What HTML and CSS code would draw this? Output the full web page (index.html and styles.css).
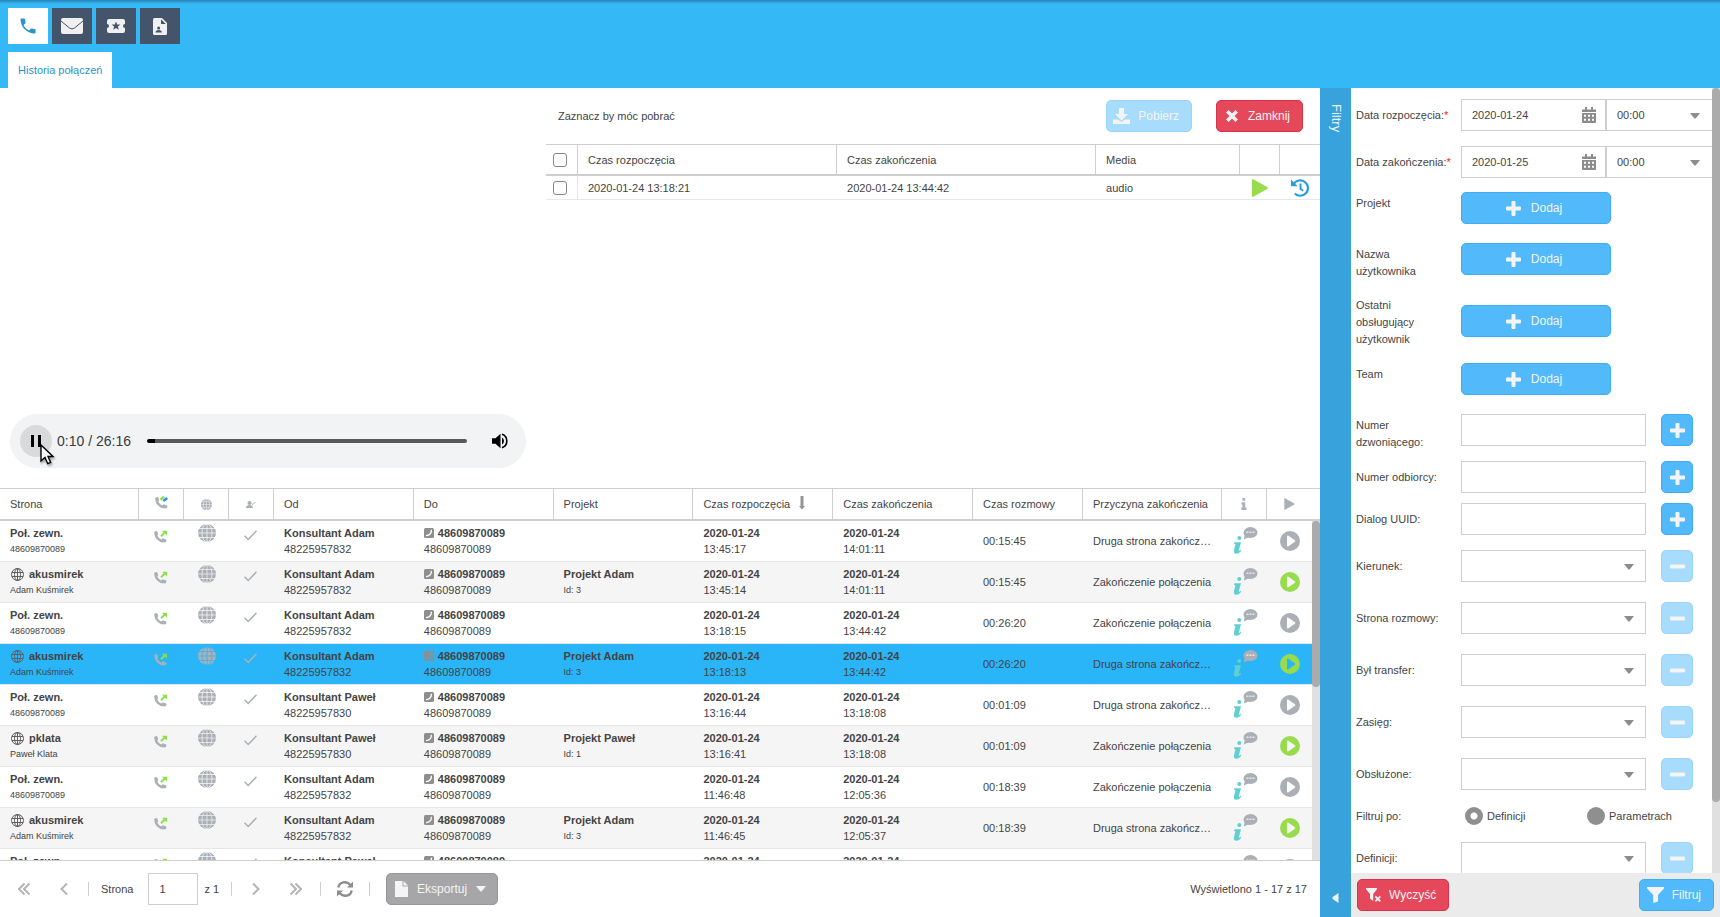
FILE: index.html
```html
<!DOCTYPE html>
<html lang="pl">
<head>
<meta charset="utf-8">
<title>Historia połączeń</title>
<link rel="stylesheet" href="styles.css">
</head>
<body>
<svg class="sprite" aria-hidden="true">
  <symbol id="phone" viewBox="0 0 24 24"><path d="M6.600 10.800c1.400 2.800 3.800 5.100 6.600 6.600l2.200-2.200c.3-.3.7-.4 1-.2 1.100.4 2.300.6 3.600.6.6 0 1 .4 1 1V20c0 .6-.4 1-1 1C10.600 21 3 13.400 3 4c0-.6.4-1 1-1h3.500c.6 0 1 .4 1 1 0 1.300.2 2.500.6 3.600.1.300 0 .7-.2 1z"/></symbol>
  <symbol id="call" viewBox="0 0 13 13"><path fill="none" stroke="currentColor" stroke-width="2.600" d="M1.600 3.500C2 7.500 5 10.800 9.500 11.300"/><path d="M0 2.600Q.5 1 2.300 1q.9 0 1.200 1l.6 1.800q.2.900-.6 1.300L2 6zM7 11l1-2q.5-.9 1.400-.6l2.200.8q1 .4.900 1.200-.2 1.800-2 2.200z"/></symbol>
  <symbol id="outgoing" viewBox="0 0 13 13"><use href="#call"/><path fill="none" stroke="#8ede4c" stroke-width="2" d="M7 6.200l3.500-3.500"/><path fill="#8ede4c" d="M8 .8h5v4.700z"/></symbol>
  <symbol id="globe" viewBox="0 0 18 18"><circle cx="9" cy="9" r="9" fill="currentColor"/><g fill="none" stroke="var(--cut, #fff)" stroke-width=".7"><path d="M9 0v18M0 9h18M1 4.500h16M1 13.500h16"/><ellipse cx="9" cy="9" rx="5" ry="9"/></g></symbol>
  <symbol id="globe-line" viewBox="0 0 13 13"><g fill="none" stroke="currentColor" stroke-width="1"><circle cx="6.500" cy="6.500" r="6"/><ellipse cx="6.500" cy="6.500" rx="3" ry="6"/><path d="M6.500.5v12M1 4.500h11M1 8.500h11"/></g></symbol>
  <symbol id="check" viewBox="0 0 13 11"><path fill="none" stroke="currentColor" stroke-width="1.500" d="M.5 5.800L4.200 9.500 12.500.8"/></symbol>
  <symbol id="phone-box" viewBox="0 0 10 10"><rect width="10" height="10" rx="1.500"/><path fill="none" stroke="var(--cut, #fff)" stroke-width="1.400" d="M7.200 1.800c.8 3-1.500 5.500-5.200 5.800"/></symbol>
  <symbol id="info" viewBox="0 0 25 27"><g class="info-letter"><circle cx="6.300" cy="11" r="2"/><path d="M1.500 15.200h6.500l-2.300 8.600q1 .2 1.800-1l.7.6q-2 3.300-5 3.300-3 0-2.200-3.600l1.300-5.200q.4-1.200-1.500-1.200z"/></g><ellipse cx="17.500" cy="5.500" rx="7" ry="5.400"/><path d="M12 7l-1.200 5.500L16.500 10z"/><g fill="#fff" opacity=".7"><rect x="13.500" y="4.500" width="2" height="1.500"/><rect x="16.500" y="4.500" width="2" height="1.500"/><rect x="19.500" y="4.500" width="2" height="1.500"/></g></symbol>
  <symbol id="play-circle" viewBox="0 0 20 20"><circle cx="10" cy="10" r="10"/><path fill="var(--cut, #fff)" d="M7 5.200q0-1.200 1.100-.6l6.800 4.600q1 .8 0 1.600l-6.800 4.600Q7 16 7 14.800z"/></symbol>
  <symbol id="play" viewBox="0 0 16 18"><path d="M0 1q0-1.300 1.200-.7l14 7.800q1.300.9 0 1.800l-14 7.800Q0 18.300 0 17z"/></symbol>
  <symbol id="plus" viewBox="0 0 15 15"><path d="M5.500 1q0-1 1-1h2q1 0 1 1v4.500H14q1 0 1 1v2q0 1-1 1H9.500V14q0 1-1 1h-2q-1 0-1-1V9.500H1q-1 0-1-1v-2q0-1 1-1h4.500z"/></symbol>
  <symbol id="minus" viewBox="0 0 15 15"><rect y="5.500" width="15" height="4" rx="1"/></symbol>
  <symbol id="caret" viewBox="0 0 10 6"><path d="M0 0h10L6 5q-1 1-2 0z"/></symbol>
  <symbol id="calendar" viewBox="0 0 14 16"><path fill-rule="evenodd" d="M0 2.500h3V0h2v2.500h4V0h2v2.500h3V5H0zM0 6h14v9q0 1-1 1H1q-1 0-1-1zm2 1.800v2h2v-2zm4 0v2h2v-2zm4 0v2h2v-2zm-8 4v2h2v-2zm4 0v2h2v-2zm4 0v2h2v-2z"/></symbol>
  <symbol id="cross" viewBox="0 0 12 12"><path fill="none" stroke="currentColor" stroke-width="3.600" d="M1.300 1.300l9.400 9.400M10.700 1.300l-9.400 9.400"/></symbol>
  <symbol id="funnel" viewBox="0 0 17 16"><path d="M0 0h17v1.500L11 8v6.500L6.200 16V8L0 1.500z"/></symbol>
</svg>

<header class="top">
  <nav class="modules" aria-label="Moduły">
    <button class="module module--active" type="button" aria-label="Połączenia"><svg width="20" height="20"><use href="#phone"/></svg></button>
    <button class="module" type="button" aria-label="Wiadomości"><svg width="22" height="16" viewBox="0 0 22 16"><rect width="22" height="16" rx="2"/><path fill="none" stroke="#44546a" stroke-width="1" d="M0 3l8.500 7q2.500 2 5 0L22 3"/></svg></button>
    <button class="module" type="button" aria-label="Zgłoszenia"><svg width="18" height="14" viewBox="0 0 18 14"><path d="M2 0h14q2 0 2 2v3a2 2 0 0 0 0 4v3q0 2-2 2H2q-2 0-2-2V9a2 2 0 0 0 0-4V2Q0 0 2 0z"/><path fill="#44546a" d="M9 2.500l1.200 3h3.200l-2.500 2 .9 3.200L9 8.900l-2.800 1.800.9-3.200-2.500-2h3.200z"/></svg></button>
    <button class="module" type="button" aria-label="Dokumenty"><svg width="14" height="17" viewBox="0 0 14 17"><path d="M1.500 0H9l5 5v10.500q0 1.500-1.500 1.500h-11Q0 17 0 15.500v-14Q0 0 1.500 0z"/><path fill="#44546a" d="M8 1.200V6h4.800zM2.500 14.500q0-2.500 3.200-2.500t3.200 2.500z"/><circle cx="5.700" cy="10" r="1.500" fill="#44546a"/></svg></button>
  </nav>
  <div class="tabs"><a class="tab" href="#historia">Historia połączeń</a></div>
</header>

<div class="workspace">
  <main class="content" id="historia">
    <section class="recording">
      <div class="player-pane">
        <div class="player">
          <button class="player-toggle" type="button" aria-label="Pauza"><svg width="12" height="14" viewBox="0 0 12 14"><path d="M1 1h3v12H1zM8 1h3v12H8z"/></svg>
            <svg class="pointer" width="16" height="22" viewBox="0 0 16 22"><path fill="#fff" stroke="#000" stroke-width="1.400" d="M1 1v16l4-3.500 2.700 6.200 3-1.300L8 12.500h5z"/></svg></button>
          <span class="player-time">0:10 / 26:16</span>
          <input class="player-seek" type="range" min="0" max="100" value="1" aria-label="Pozycja nagrania">
          <button class="player-mute" type="button" aria-label="Wycisz"><svg width="16" height="16" viewBox="0 0 16 16"><path d="M0 5.300h3.500L8.500.8v14.400l-5-4.500H0z"/><path d="M10 4.500q2 1.200 2 3.500t-2 3.500z"/><path fill="none" stroke="currentColor" stroke-width="1.600" d="M10 1.300q4.800 1.500 4.800 6.700T10 14.700"/></svg></button>
        </div>
      </div>
      <div class="media-pane">
        <div class="media-bar">
          <span class="media-hint">Zaznacz by móc pobrać</span>
          <button class="btn btn--muted btn--download" type="button" disabled><svg width="17" height="16" viewBox="0 0 17 16"><path d="M6 0h5v6h4l-6.500 6.500L2 6h4z"/><path d="M0 11.500h5l3.500 2.500 3.500-2.500h5V16H0z"/></svg>Pobierz</button>
          <button class="btn btn--danger btn--close" type="button"><svg width="12" height="12"><use href="#cross"/></svg>Zamknij</button>
        </div>
        <table class="media-table">
          <thead><tr><th><input type="checkbox" aria-label="Zaznacz wszystkie"></th><th>Czas rozpoczęcia</th><th>Czas zakończenia</th><th>Media</th><th></th><th></th></tr></thead>
          <tbody><tr><td><input type="checkbox" aria-label="Zaznacz nagranie"></td><td>2020-01-24 13:18:21</td><td>2020-01-24 13:44:42</td><td>audio</td>
            <td><button class="bare green" type="button" aria-label="Odtwórz"><svg width="16" height="18"><use href="#play"/></svg></button></td>
            <td><button class="bare blue" type="button" aria-label="Historia"><svg width="18" height="18" viewBox="0 0 18 18"><path fill="none" stroke="currentColor" stroke-width="2.200" d="M2.700 5A7.700 7.700 0 1 1 3.800 14.500"/><path fill="none" stroke="currentColor" stroke-width="2" d="M9.500 4.500v5.200l2.700 2"/><path d="M0 .5v6.700h6.700z"/></svg></button></td></tr></tbody>
        </table>
      </div>
    </section>

    <section class="calls">
      <table class="calls-table">
        <thead><tr><th>Strona</th>
          <th class="c"><svg class="grey raised" width="13" height="13" viewBox="0 0 13 13"><use href="#call"/><path d="M5.500 3.800L9 .8" stroke="#8ede4c" stroke-width="2.500"/><path d="M8.300 5L12.300 2" stroke="#2f8df5" stroke-width="2.500"/></svg></th>
          <th class="c"><svg class="grey" width="11" height="11"><use href="#globe"/></svg></th>
          <th class="c"><svg class="grey" width="10" height="7" viewBox="0 0 10 7"><circle cx="3.500" cy="2" r="2"/><path d="M0 7q0-3 3.500-3T7 7z"/><path fill="none" stroke="currentColor" d="M5.500 2.500l1.500 1L9.500 1"/></svg></th>
          <th>Od</th><th>Do</th><th>Projekt</th>
          <th>Czas rozpoczęcia<svg class="sort" width="6" height="14" viewBox="0 0 6 14"><path d="M1.500 0h3v10H6l-3 3.500L0 10h1.500z"/></svg></th>
          <th>Czas zakończenia</th><th>Czas rozmowy</th><th>Przyczyna zakończenia</th>
          <th class="c"><svg class="grey" width="6" height="12" viewBox="0 0 6 12"><path d="M1.500 0h2.700v2.700H1.500zM.5 4.300h3.700v5.200H5.500V12H.3V9.500h1.200V6.600h-1z"/></svg></th>
          <th class="c"><svg class="grey" width="11" height="12" viewBox="0 0 16 18"><use href="#play"/></svg></th></tr></thead>
        <tbody>
          <tr><td><b>Poł. zewn.</b><small>48609870089</small></td><td class="i"><svg width="13" height="13"><use href="#outgoing"/></svg></td><td class="i g"><svg width="18" height="18"><use href="#globe"/></svg></td><td class="i"><svg width="13" height="11"><use href="#check"/></svg></td><td><b>Konsultant Adam</b><span>48225957832</span></td><td><b><svg class="box" width="10" height="10"><use href="#phone-box"/></svg>48609870089</b><span>48609870089</span></td><td></td><td><b>2020-01-24</b><span>13:45:17</span></td><td><b>2020-01-24</b><span>14:01:11</span></td><td class="m">00:15:45</td><td class="m"><span>Druga strona zakończenie połączenia</span></td><td class="c"><svg width="25" height="27"><use href="#info"/></svg></td><td class="p"><button class="bare" type="button" aria-label="Odtwórz"><svg width="20" height="20"><use href="#play-circle"/></svg></button></td></tr>
          <tr><td><b><svg class="user" width="13" height="13"><use href="#globe-line"/></svg>akusmirek</b><small>Adam Kuśmirek</small></td><td class="i"><svg width="13" height="13"><use href="#outgoing"/></svg></td><td class="i g"><svg width="18" height="18"><use href="#globe"/></svg></td><td class="i"><svg width="13" height="11"><use href="#check"/></svg></td><td><b>Konsultant Adam</b><span>48225957832</span></td><td><b><svg class="box" width="10" height="10"><use href="#phone-box"/></svg>48609870089</b><span>48609870089</span></td><td><b>Projekt Adam</b><small>Id: 3</small></td><td><b>2020-01-24</b><span>13:45:14</span></td><td><b>2020-01-24</b><span>14:01:11</span></td><td class="m">00:15:45</td><td class="m"><span>Zakończenie połączenia</span></td><td class="c"><svg width="25" height="27"><use href="#info"/></svg></td><td class="p"><button class="bare green" type="button" aria-label="Odtwórz"><svg width="20" height="20"><use href="#play-circle"/></svg></button></td></tr>
          <tr><td><b>Poł. zewn.</b><small>48609870089</small></td><td class="i"><svg width="13" height="13"><use href="#outgoing"/></svg></td><td class="i g"><svg width="18" height="18"><use href="#globe"/></svg></td><td class="i"><svg width="13" height="11"><use href="#check"/></svg></td><td><b>Konsultant Adam</b><span>48225957832</span></td><td><b><svg class="box" width="10" height="10"><use href="#phone-box"/></svg>48609870089</b><span>48609870089</span></td><td></td><td><b>2020-01-24</b><span>13:18:15</span></td><td><b>2020-01-24</b><span>13:44:42</span></td><td class="m">00:26:20</td><td class="m"><span>Zakończenie połączenia</span></td><td class="c"><svg width="25" height="27"><use href="#info"/></svg></td><td class="p"><button class="bare" type="button" aria-label="Odtwórz"><svg width="20" height="20"><use href="#play-circle"/></svg></button></td></tr>
          <tr class="selected"><td><b><svg class="user" width="13" height="13"><use href="#globe-line"/></svg>akusmirek</b><small>Adam Kuśmirek</small></td><td class="i"><svg width="13" height="13"><use href="#outgoing"/></svg></td><td class="i g"><svg width="18" height="18"><use href="#globe"/></svg></td><td class="i"><svg width="13" height="11"><use href="#check"/></svg></td><td><b>Konsultant Adam</b><span>48225957832</span></td><td><b><svg class="box" width="10" height="10"><use href="#phone-box"/></svg>48609870089</b><span>48609870089</span></td><td><b>Projekt Adam</b><small>Id: 3</small></td><td><b>2020-01-24</b><span>13:18:13</span></td><td><b>2020-01-24</b><span>13:44:42</span></td><td class="m">00:26:20</td><td class="m"><span>Druga strona zakończenie połączenia</span></td><td class="c"><svg width="25" height="27"><use href="#info"/></svg></td><td class="p"><button class="bare green" type="button" aria-label="Odtwórz"><svg width="20" height="20"><use href="#play-circle"/></svg></button></td></tr>
          <tr><td><b>Poł. zewn.</b><small>48609870089</small></td><td class="i"><svg width="13" height="13"><use href="#outgoing"/></svg></td><td class="i g"><svg width="18" height="18"><use href="#globe"/></svg></td><td class="i"><svg width="13" height="11"><use href="#check"/></svg></td><td><b>Konsultant Paweł</b><span>48225957830</span></td><td><b><svg class="box" width="10" height="10"><use href="#phone-box"/></svg>48609870089</b><span>48609870089</span></td><td></td><td><b>2020-01-24</b><span>13:16:44</span></td><td><b>2020-01-24</b><span>13:18:08</span></td><td class="m">00:01:09</td><td class="m"><span>Druga strona zakończenie połączenia</span></td><td class="c"><svg width="25" height="27"><use href="#info"/></svg></td><td class="p"><button class="bare" type="button" aria-label="Odtwórz"><svg width="20" height="20"><use href="#play-circle"/></svg></button></td></tr>
          <tr><td><b><svg class="user" width="13" height="13"><use href="#globe-line"/></svg>pklata</b><small>Paweł Klata</small></td><td class="i"><svg width="13" height="13"><use href="#outgoing"/></svg></td><td class="i g"><svg width="18" height="18"><use href="#globe"/></svg></td><td class="i"><svg width="13" height="11"><use href="#check"/></svg></td><td><b>Konsultant Paweł</b><span>48225957830</span></td><td><b><svg class="box" width="10" height="10"><use href="#phone-box"/></svg>48609870089</b><span>48609870089</span></td><td><b>Projekt Paweł</b><small>Id: 1</small></td><td><b>2020-01-24</b><span>13:16:41</span></td><td><b>2020-01-24</b><span>13:18:08</span></td><td class="m">00:01:09</td><td class="m"><span>Zakończenie połączenia</span></td><td class="c"><svg width="25" height="27"><use href="#info"/></svg></td><td class="p"><button class="bare green" type="button" aria-label="Odtwórz"><svg width="20" height="20"><use href="#play-circle"/></svg></button></td></tr>
          <tr><td><b>Poł. zewn.</b><small>48609870089</small></td><td class="i"><svg width="13" height="13"><use href="#outgoing"/></svg></td><td class="i g"><svg width="18" height="18"><use href="#globe"/></svg></td><td class="i"><svg width="13" height="11"><use href="#check"/></svg></td><td><b>Konsultant Adam</b><span>48225957832</span></td><td><b><svg class="box" width="10" height="10"><use href="#phone-box"/></svg>48609870089</b><span>48609870089</span></td><td></td><td><b>2020-01-24</b><span>11:46:48</span></td><td><b>2020-01-24</b><span>12:05:36</span></td><td class="m">00:18:39</td><td class="m"><span>Zakończenie połączenia</span></td><td class="c"><svg width="25" height="27"><use href="#info"/></svg></td><td class="p"><button class="bare" type="button" aria-label="Odtwórz"><svg width="20" height="20"><use href="#play-circle"/></svg></button></td></tr>
          <tr><td><b><svg class="user" width="13" height="13"><use href="#globe-line"/></svg>akusmirek</b><small>Adam Kuśmirek</small></td><td class="i"><svg width="13" height="13"><use href="#outgoing"/></svg></td><td class="i g"><svg width="18" height="18"><use href="#globe"/></svg></td><td class="i"><svg width="13" height="11"><use href="#check"/></svg></td><td><b>Konsultant Adam</b><span>48225957832</span></td><td><b><svg class="box" width="10" height="10"><use href="#phone-box"/></svg>48609870089</b><span>48609870089</span></td><td><b>Projekt Adam</b><small>Id: 3</small></td><td><b>2020-01-24</b><span>11:46:45</span></td><td><b>2020-01-24</b><span>12:05:37</span></td><td class="m">00:18:39</td><td class="m"><span>Druga strona zakończenie połączenia</span></td><td class="c"><svg width="25" height="27"><use href="#info"/></svg></td><td class="p"><button class="bare green" type="button" aria-label="Odtwórz"><svg width="20" height="20"><use href="#play-circle"/></svg></button></td></tr>
          <tr><td><b>Poł. zewn.</b></td><td class="i"><svg width="13" height="13"><use href="#outgoing"/></svg></td><td class="i g"><svg width="18" height="18"><use href="#globe"/></svg></td><td class="i"><svg width="13" height="11"><use href="#check"/></svg></td><td><b>Konsultant Paweł</b></td><td><b><svg class="box" width="10" height="10"><use href="#phone-box"/></svg>48609870089</b></td><td></td><td><b>2020-01-24</b></td><td><b>2020-01-24</b></td><td></td><td></td><td class="c"><svg width="25" height="27"><use href="#info"/></svg></td><td class="p"><button class="bare" type="button" aria-label="Odtwórz"><svg width="20" height="20"><use href="#play-circle"/></svg></button></td></tr>
        </tbody>
      </table>
      <div class="scrollbar scrollbar--calls"><div class="thumb"></div></div>
    </section>

    <footer class="pager">
      <button class="step" type="button" aria-label="Pierwsza strona"><svg width="12" height="12" viewBox="0 0 12 12"><path d="M6.500.5L1 6l5.500 5.500M11.500.5L6 6l5.500 5.500"/></svg></button>
      <button class="step" type="button" aria-label="Poprzednia strona"><svg width="8" height="12" viewBox="0 0 8 12"><path d="M7 .5L1.500 6 7 11.500"/></svg></button>
      <i class="divider"></i>
      <label class="pager-label" for="page">Strona</label>
      <input class="box-input pager-page" id="page" type="text" value="1">
      <span class="pager-total">z 1</span>
      <i class="divider"></i>
      <button class="step" type="button" aria-label="Następna strona"><svg width="8" height="12" viewBox="0 0 8 12"><path d="M1 .5L6.500 6 1 11.500"/></svg></button>
      <button class="step step--last" type="button" aria-label="Ostatnia strona"><svg width="12" height="12" viewBox="0 0 12 12"><path d="M.5.5L6 6 .5 11.500M5.500.5L11 6l-5.500 5.500"/></svg></button>
      <i class="divider"></i>
      <button class="step step--refresh" type="button" aria-label="Odśwież"><svg width="16" height="16" viewBox="0 0 16 16"><path d="M1.300 6.500C2.500.5 9.500-.5 13.500 4M14.700 9.500C13.500 15.500 6.500 16.500 2.500 12"/><path class="tip" d="M16 .5v6h-6zM0 15.500v-6h6z"/></svg></button>
      <i class="divider"></i>
      <button class="btn btn--grey" type="button"><svg width="13" height="16" viewBox="0 0 13 16"><path d="M0 0h7.500v5.500H13V16H0zM8.500 0L13 4.500H8.500z"/></svg>Eksportuj<svg width="10" height="6"><use href="#caret"/></svg></button>
      <span class="pager-info">Wyświetlono 1 - 17 z 17</span>
    </footer>
  </main>

  <aside class="filters">
    <button class="filters-toggle" type="button"><span>Filtry</span><svg width="7" height="10" viewBox="0 0 7 10"><path d="M6.500 0v10L.7 6Q0 5 .7 4z"/></svg></button>
    <form class="filters-panel">
      <div class="filters-scroll">
        <div class="fields">
          <div class="field"><label for="f1">Data rozpoczęcia:<em>*</em></label><div class="date"><input class="box-input" id="f1" type="text" value="2020-01-24"><svg width="14" height="16"><use href="#calendar"/></svg></div><div class="pick pick--time"><select class="box-input" aria-label="Godzina rozpoczęcia"><option>00:00</option></select><svg width="10" height="6"><use href="#caret"/></svg></div></div>
          <div class="field field--close"><label for="f2">Data zakończenia:<em>*</em></label><div class="date"><input class="box-input" id="f2" type="text" value="2020-01-25"><svg width="14" height="16"><use href="#calendar"/></svg></div><div class="pick pick--time"><select class="box-input" aria-label="Godzina zakończenia"><option>00:00</option></select><svg width="10" height="6"><use href="#caret"/></svg></div></div>
          <div class="field field--add"><label for="f3">Projekt</label><button class="btn btn--add" id="f3" type="button"><svg width="15" height="15"><use href="#plus"/></svg>Dodaj</button></div>
          <div class="field field--add"><label for="f4">Nazwa<br>użytkownika</label><button class="btn btn--add" id="f4" type="button"><svg width="15" height="15"><use href="#plus"/></svg>Dodaj</button></div>
          <div class="field field--add field--three"><label for="f5">Ostatni<br>obsługujący<br>użytkownik</label><button class="btn btn--add" id="f5" type="button"><svg width="15" height="15"><use href="#plus"/></svg>Dodaj</button></div>
          <div class="field field--add"><label for="f6">Team</label><button class="btn btn--add" id="f6" type="button"><svg width="15" height="15"><use href="#plus"/></svg>Dodaj</button></div>
          <div class="field field--two"><label for="f7">Numer<br>dzwoniącego:</label><input class="box-input value" id="f7" type="text"><button class="btn btn--icon" type="button" aria-label="Dodaj numer"><svg width="15" height="15"><use href="#plus"/></svg></button></div>
          <div class="field field--tight"><label for="f8">Numer odbiorcy:</label><input class="box-input value" id="f8" type="text"><button class="btn btn--icon" type="button" aria-label="Dodaj odbiorcę"><svg width="15" height="15"><use href="#plus"/></svg></button></div>
          <div class="field"><label for="f9">Dialog UUID:</label><input class="box-input value" id="f9" type="text"><button class="btn btn--icon" type="button" aria-label="Dodaj UUID"><svg width="15" height="15"><use href="#plus"/></svg></button></div>
          <div class="field field--loose"><label for="f10">Kierunek:</label><div class="pick value"><select class="box-input" id="f10"><option></option></select><svg width="10" height="6"><use href="#caret"/></svg></div><button class="btn btn--icon btn--muted" type="button" disabled aria-label="Usuń kierunek"><svg width="15" height="15"><use href="#minus"/></svg></button></div>
          <div class="field field--loose"><label for="f11">Strona rozmowy:</label><div class="pick value"><select class="box-input" id="f11"><option></option></select><svg width="10" height="6"><use href="#caret"/></svg></div><button class="btn btn--icon btn--muted" type="button" disabled aria-label="Usuń stronę"><svg width="15" height="15"><use href="#minus"/></svg></button></div>
          <div class="field field--loose"><label for="f12">Był transfer:</label><div class="pick value"><select class="box-input" id="f12"><option></option></select><svg width="10" height="6"><use href="#caret"/></svg></div><button class="btn btn--icon btn--muted" type="button" disabled aria-label="Usuń transfer"><svg width="15" height="15"><use href="#minus"/></svg></button></div>
          <div class="field field--loose"><label for="f13">Zasięg:</label><div class="pick value"><select class="box-input" id="f13"><option></option></select><svg width="10" height="6"><use href="#caret"/></svg></div><button class="btn btn--icon btn--muted" type="button" disabled aria-label="Usuń zasięg"><svg width="15" height="15"><use href="#minus"/></svg></button></div>
          <div class="field field--tight"><label for="f14">Obsłużone:</label><div class="pick value"><select class="box-input" id="f14"><option></option></select><svg width="10" height="6"><use href="#caret"/></svg></div><button class="btn btn--icon btn--muted" type="button" disabled aria-label="Usuń obsłużone"><svg width="15" height="15"><use href="#minus"/></svg></button></div>
          <div class="field field--tight"><span class="caption">Filtruj po:</span><div class="radios"><label><input type="radio" name="by" checked>Definicji</label><label><input type="radio" name="by">Parametrach</label></div></div>
          <div class="field"><label for="f15">Definicji:</label><div class="pick value"><select class="box-input" id="f15"><option></option></select><svg width="10" height="6"><use href="#caret"/></svg></div><button class="btn btn--icon btn--muted" type="button" disabled aria-label="Usuń definicję"><svg width="15" height="15"><use href="#minus"/></svg></button></div>
        </div>
        <div class="scrollbar"><div class="thumb"></div></div>
      </div>
      <div class="filters-actions">
        <button class="btn btn--danger btn--clear" type="reset"><svg width="15" height="14" viewBox="0 0 15 14"><path d="M0 0h11v1.200L7.200 6v7L4 10.500V6L0 1.200z"/><path fill="none" stroke="currentColor" stroke-width="1.800" d="M9.300 8.300l5 5M14.300 8.300l-5 5"/></svg>Wyczyść</button>
        <button class="btn btn--filter" type="button"><svg width="17" height="16"><use href="#funnel"/></svg>Filtruj</button>
      </div>
    </form>
  </aside>
</div>
</body>
</html>
```
FILE: styles.css
```css
* { box-sizing: border-box; }

body {
  margin: 0;
  height: 100vh;
  display: flex;
  flex-direction: column;
  overflow: hidden;
  background: #fff;
  color: #444;
  font: 11px/16px "Liberation Sans", Arial, sans-serif;
}

button, input, select { font: inherit; color: inherit; margin: 0; }
button { padding: 0; border: 0; cursor: pointer; }
svg { display: block; flex: none; fill: currentColor; }
.sprite { position: absolute; width: 0; height: 0; }

/* Top bar */
.top {
  flex: none;
  padding: 8px 8px 0;
  background: linear-gradient(#2683b3, #35b9f6 4px);
}
.modules { display: flex; gap: 4px; margin-bottom: 8px; }
.module {
  width: 40px;
  height: 36px;
  display: grid;
  place-items: center;
  background: #44546a;
  color: #f0f0f0;
}
.module--active { background: #fff; color: #2b93c5; }
.tabs { display: flex; }
.tab {
  padding: 0 10px;
  background: #fff;
  color: #2b93c5;
  line-height: 36px;
  text-decoration: none;
}

.workspace { flex: 1; min-height: 0; display: flex; }
.content { flex: 1; min-width: 0; display: flex; flex-direction: column; }

/* Buttons */
.btn {
  height: 32px;
  padding: 0 12px;
  display: flex;
  align-items: center;
  justify-content: center;
  gap: 10px;
  border: 1px solid #3daef3;
  border-radius: 5px;
  background: #52bafb;
  color: #f4f4f4;
  font-size: 12px;
}
.btn--muted { background: #a8dcfc; border-color: #98d6fb; }
.btn--danger { background: #e4485a; border-color: #d9334a; }
.btn--grey { gap: 9px; background: #a6a6a8; border-color: #98989a; padding: 0 11px 0 8px; }
.btn--download { padding: 0 12px 0 6px; gap: 8px; margin-right: 24px; }
.btn--close { padding: 0 12px 0 9px; }
.btn--clear { padding: 0 12px 0 8px; gap: 8px; }
.btn--add { width: 150px; padding: 0 16px 0 12px; }
.btn--icon { width: 32px; padding: 0; }
.btn--filter { padding: 0 12px 0 7px; gap: 8px; }
.bare { display: block; background: none; color: inherit; }
.bare.green { color: #98dc4e; }
.bare.blue { color: #2b9be0; }

/* Recording */
.recording { flex: none; height: 400px; display: flex; }
.player-pane { flex: none; width: 546px; padding: 0 20px 20px 10px; display: flex; align-items: flex-end; }
.player {
  flex: 1;
  height: 54px;
  padding: 0 18px 0 10px;
  display: flex;
  align-items: center;
  border-radius: 27px;
  background: #f1f3f4;
  color: #000;
}
.player-toggle {
  position: relative;
  width: 32px;
  height: 32px;
  display: grid;
  place-items: center;
  border-radius: 50%;
  background: #d8dadb;
  margin-right: 5px;
}
.pointer { position: absolute; left: 20px; top: 19px; filter: drop-shadow(1px 2px 1px #0005); }
.player-time { font-size: 14px; color: #3a3b3b; margin-right: 16px; }
.player-seek {
  flex: 1;
  height: 4px;
  appearance: none;
  border-radius: 2px;
  background: linear-gradient(90deg, #000 8px, #58595a 8px);
}
.player-seek::-webkit-slider-thumb { appearance: none; width: 1px; height: 1px; }
.player-mute { margin-left: 25px; background: none; }

.media-pane { flex: 1; min-width: 0; }
.media-bar { height: 56px; padding: 0 17px 0 12px; display: flex; align-items: center; }
.media-hint { margin-right: auto; }

table { border-collapse: collapse; }
th { font-weight: normal; text-align: left; }
.media-table, .media-table thead, .media-table tbody { display: block; }
.media-table tr { display: grid; grid-template-columns: 32px 9fr 9fr 5fr 40px 40px; }
.media-table th, .media-table td { padding: 0 10px; display: flex; align-items: center; }
.media-table td:nth-child(n+5) { padding: 0; justify-content: center; }
.media-table thead tr { height: 32px; border-top: 1px solid #cfcfcf; border-bottom: 2px solid #cfcfcf; }
.media-table th { border-right: 1px solid #cfcfcf; }
.media-table th:last-child { border-right: 0; }
.media-table th:first-child, .media-table td:first-child { padding: 0 0 0 7px; }
.media-table tbody tr { height: 24px; border-bottom: 1px solid #e8e8e8; }
.media-table td:first-child { border-right: 1px solid #e8e8e8; }
input[type="checkbox"] {
  width: 14px;
  height: 14px;
  appearance: none;
  border: 1px solid #858585;
  border-radius: 3px;
  background: #fff;
}

/* Call list */
.calls { position: relative; flex: 1; min-height: 0; border-bottom: 1px solid #cfcfcf; }
.calls-table { height: 100%; display: flex; flex-direction: column; }
.calls-table thead { flex: none; display: block; }
.calls-table tbody { flex: 1; min-height: 0; display: block; overflow: hidden; }
.calls-table tr {
  display: grid;
  grid-template-columns: 139px 45px 45px 45px 1fr 1fr 1fr 1fr 1fr 110px 139px 45px 53px;
}
.calls-table thead tr { height: 33px; border-top: 1px solid #cfcfcf; border-bottom: 2px solid #cfcfcf; }
.calls-table th { padding: 0 10px; display: flex; align-items: center; border-right: 1px solid #cfcfcf; }
.calls-table th.c { padding-left: 0; padding-right: 0; justify-content: center; }
.calls-table th:last-child { border-right: 0; padding-right: 8px; }
.grey { color: #aab0b6; }
.raised { margin-bottom: 4px; }
.sort { margin-left: 9px; margin-bottom: 3px; color: #959595; }

.calls-table tbody tr { height: 41px; border-bottom: 1px solid #e6e6e6; }
.calls-table tbody tr:nth-child(even) { --cut: #f5f5f5; background: #f5f5f5; }
.calls-table tbody tr.selected { --cut: #29b5f7; background: #29b5f7; }
.calls-table td { min-width: 0; padding: 4px 10px 0; white-space: nowrap; }
.calls-table b { display: flex; align-items: center; }
.calls-table td span { display: block; }
.calls-table small { display: block; font-size: 9px; }
.calls-table td.m { padding: 0 10px; line-height: 40px; }
.calls-table td.m span { overflow: hidden; text-overflow: ellipsis; }
.calls-table td.i { padding: 9px 0 0 15px; color: #aab0b6; }
.calls-table td.g { padding: 3px 0 0 14px; }
.calls-table td.c { padding: 6px 0 0 11px; color: #aab0b6; }
.calls-table td.p { padding: 10px 0 0 13px; color: #aab0b6; }
.info-letter { fill: #5fcfd2; }
.box { margin-right: 4px; color: #8e8e8e; }
.user { margin: 0 5px 0 1px; color: #606060; }

.scrollbar { width: 8px; background: #e0e0e0; }
.scrollbar .thumb { border-radius: 4px; background: #ababab; height: 91%; }
.scrollbar--calls { position: absolute; top: 33px; right: 0; bottom: 0; }
.scrollbar--calls .thumb { height: 49%; }

/* Pager */
.pager { flex: none; height: 56px; padding: 0 13px 0 18px; display: flex; align-items: center; }
.step { background: none; color: #b5b5b5; margin-right: 30px; }
.step + .step { margin-right: 20px; }
.step path { fill: none; stroke: currentColor; stroke-width: 2; }
.divider + .step { margin-left: 20px; }
.step + .step--last { margin-right: 18px; }
.divider + .step--refresh { margin: 0 16px; color: #8c8c8c; }
.step--refresh path { stroke-width: 2.400; }
.step .tip { fill: currentColor; stroke: none; }
.divider { width: 1px; height: 14px; background: #cfcfcf; }
.pager-label { margin: 0 15px 0 12px; }
.pager-page { width: 50px; margin-right: 6px; }
.pager-total { margin-right: 12px; }
.pager .btn { margin-left: 16px; }
.pager-info { margin-left: auto; }

.box-input {
  height: 32px;
  padding: 0 10px;
  border: 1px solid #cfcfcf;
  border-radius: 0;
  background: #fff;
  appearance: none;
}

/* Filters */
.filters { flex: none; width: 400px; display: flex; }
.filters-toggle {
  width: 31px;
  padding: 16px 0 14px;
  display: flex;
  flex-direction: column;
  align-items: center;
  justify-content: space-between;
  background: #38a2dc;
  color: #eef6fb;
}
.filters-toggle span { writing-mode: vertical-rl; font-size: 13px; }
.filters-panel { flex: 1; min-width: 0; display: flex; flex-direction: column; }
.filters-scroll { flex: 1; min-height: 0; display: flex; overflow: hidden; }
.fields { flex: 1; min-width: 0; padding: 11px 0 0 5px; overflow: hidden; }
.field { display: flex; align-items: flex-start; margin-bottom: 15px; }
.field > label, .caption { flex: none; width: 105px; line-height: 32px; white-space: nowrap; }
.field em { color: #f22; font-style: normal; }
.field--close { margin-bottom: 14px; }
.field--tight { margin-bottom: 10px; }
.field--loose { margin-bottom: 20px; }
.field--add { min-height: 32px; margin-bottom: 19px; }
.field--add > label, .field--two > label { height: 32px; padding-top: 3px; line-height: 17px; }
.field--three { align-items: center; margin-bottom: 15px; }
.field--three > label { height: auto; }
.value { flex: none; width: 185px; margin-right: 15px; }
.date { position: relative; flex: none; width: 145px; }
.date .box-input { width: 100%; }
.date svg { position: absolute; right: 10px; top: 8px; color: #8c8c8c; }
.pick { position: relative; }
.pick .box-input { width: 100%; }
.pick svg { position: absolute; right: 12px; top: 14px; color: #8c8c8c; pointer-events: none; }
.pick--time { flex: 1; }
.pick--time .box-input { border-right: 0; }
.radios { display: flex; }
.radios label { width: 122px; padding-left: 4px; display: flex; align-items: center; gap: 4px; line-height: 32px; }
input[type="radio"] {
  width: 18px;
  height: 18px;
  appearance: none;
  border-radius: 50%;
  background: #8f8f8f;
}
input[type="radio"]:checked { background: radial-gradient(circle, #fff 3px, #8f8f8f 4px); }
.filters-actions {
  flex: none;
  height: 44px;
  padding: 0 6px;
  display: flex;
  align-items: center;
  justify-content: space-between;
  background: #ebebeb;
}
```
